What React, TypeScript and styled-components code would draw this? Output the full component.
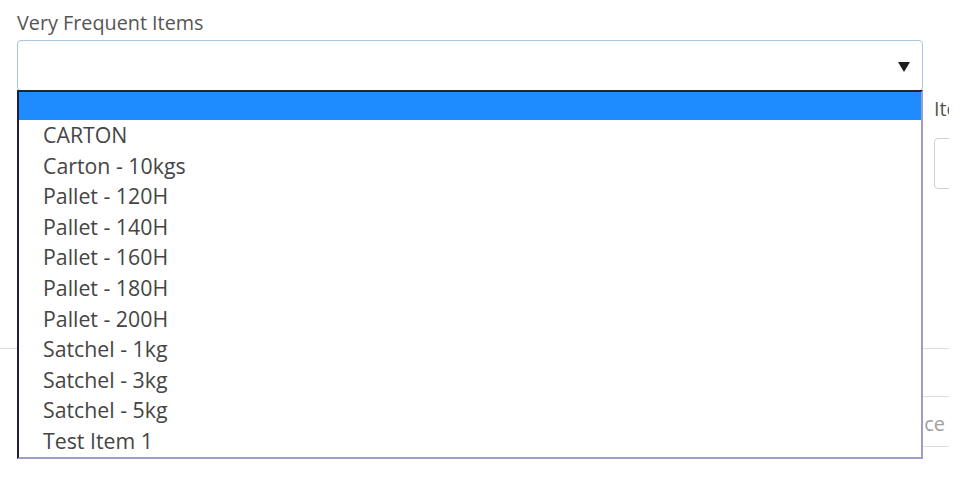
import React from 'react';
import styled, { createGlobalStyle } from 'styled-components';

const GlobalStyle = createGlobalStyle`
  html, body {
    margin: 0;
    background: #fff;
  }
  body {
    font-family: "Open Sans", "Liberation Sans", sans-serif;
    color: #555;
  }
`;

const items = [
  'CARTON',
  'Carton - 10kgs',
  'Pallet - 120H',
  'Pallet - 140H',
  'Pallet - 160H',
  'Pallet - 180H',
  'Pallet - 200H',
  'Satchel - 1kg',
  'Satchel - 3kg',
  'Satchel - 5kg',
  'Test Item 1',
];

const Page = styled.div`
  width: 949px;
  height: 484px;
  overflow: hidden;
  position: relative;
  padding-top: 10px;
  box-sizing: border-box;
`;

const FormRow = styled.div<{ $top?: number }>`
  display: flex;
  gap: 11px;
  padding-left: 17px;
  margin-top: ${(p) => p.$top ?? 0}px;
`;

const Field = styled.div<{ $width?: number }>`
  display: flex;
  flex-direction: column;
  flex: 0 0 ${(p) => (p.$width ? `${p.$width}px` : 'auto')};
  min-width: 0;
`;

const Label = styled.label<{ $gap?: number }>`
  font-size: 19.8px;
  line-height: 26px;
  color: #555;
  white-space: nowrap;
  margin-bottom: ${(p) => p.$gap ?? 4}px;
`;

const SelectWrap = styled.div`
  position: relative;
`;

const SelectBox = styled.div`
  height: 51px;
  box-sizing: border-box;
  border: 1px solid #a9c6de;
  border-radius: 4px;
  background: #fff;
  display: flex;
  align-items: center;
  justify-content: flex-end;
  padding-right: 12px;
`;

const Arrow = styled.span`
  width: 0;
  height: 0;
  border-left: 6px solid transparent;
  border-right: 6px solid transparent;
  border-top: 10px solid #1d1d1d;
  margin-top: 2px;
`;

const Listbox = styled.ul`
  position: absolute;
  top: 50px;
  left: 0;
  right: 0;
  margin: 0;
  padding: 0;
  list-style: none;
  background: #fff;
  border-top: 2px solid #24242c;
  border-left: 2px solid #1f1f3d;
  border-right: 2px solid #9c9ec9;
  border-bottom: 2px solid #9c9ec9;
  z-index: 5;
`;

const Option = styled.li<{ $active?: boolean }>`
  height: ${(p) => (p.$active ? '28px' : '30.6px')};
  line-height: 30.6px;
  padding-left: 24px;
  font-size: 21.3px;
  color: #454545;
  background: ${(p) => (p.$active ? '#1e8cff' : '#fff')};
  white-space: nowrap;
`;

const Input = styled.div<{ $full?: boolean }>`
  width: ${(p) => (p.$full ? '100%' : '120px')};
  height: 51px;
  box-sizing: border-box;
  border: 1px solid #cfcfcf;
  border-radius: 4px;
  background: #fff;
`;

const Spacer = styled.div<{ $h: number }>`
  height: ${(p) => p.$h}px;
`;

const Section = styled.div`
  border-top: 1px solid #dcdcdc;
`;

const Table = styled.div`
  margin-left: 17px;
`;

const Row = styled.div<{ $h: number; $line?: boolean }>`
  height: ${(p) => p.$h}px;
  box-sizing: border-box;
  border-bottom: ${(p) => (p.$line ? '1px solid #dcdcdc' : 'none')};
  display: flex;
  align-items: center;
  justify-content: flex-end;
  padding-right: 4px;
`;

const Placeholder = styled.span`
  font-size: 20px;
  color: #a0a0a0;
  margin-top: 3px;
`;

export default function App() {
  return (
    <Page>
      <GlobalStyle />
      <FormRow>
        <Field $width={906}>
          <Label>Very Frequent Items</Label>
          <SelectWrap>
            <SelectBox>
              <Arrow />
            </SelectBox>
            <Listbox role="listbox">
              <Option $active aria-selected="true" />
              {items.map((it) => (
                <Option key={it}>{it}</Option>
              ))}
            </Listbox>
          </SelectWrap>
        </Field>
      </FormRow>
      <FormRow $top={5}>
        <Field $width={906}>
          <Label $gap={16}>Quantity</Label>
          <Input $full />
        </Field>
        <Field>
          <Label $gap={16}>Item</Label>
          <Input />
        </Field>
      </FormRow>
      <Spacer $h={159} />
      <Section>
        <Table>
          <Row $h={48} $line />
          <Row $h={50} $line>
            <Placeholder>Price</Placeholder>
          </Row>
        </Table>
      </Section>
    </Page>
  );
}
